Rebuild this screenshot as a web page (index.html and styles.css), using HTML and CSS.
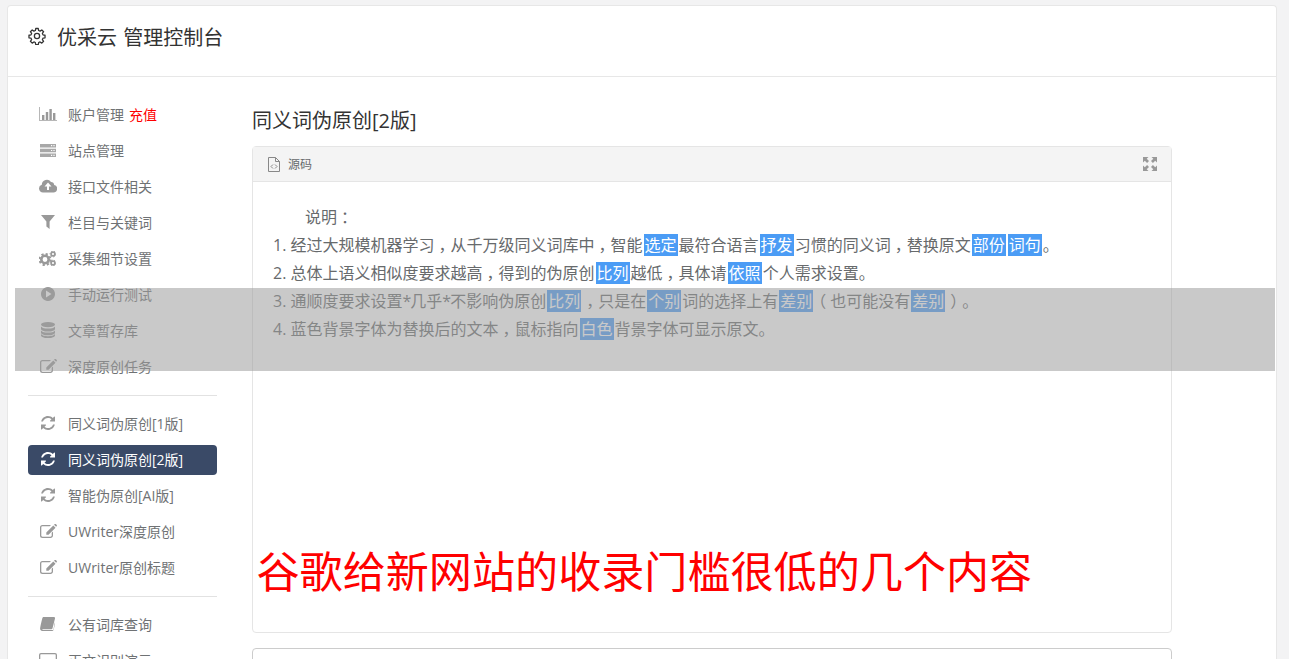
FILE: index.html
```html
<!DOCTYPE html>
<html lang="zh-CN">
<head>
<meta charset="utf-8">
<title>优采云 管理控制台</title>
<link rel="stylesheet" href="styles.css">
</head>
<body>
<svg class="defs" width="0" height="0" aria-hidden="true">
  <defs>
    <symbol id="i-chart" viewBox="0 0 18 14"><path fill-opacity=".7" d="M0 0h1v13h17v1H0z"/><path d="M3 8h2.400v5H3zM6.800 5h2.400v8H6.800zM10.400 2h2.400v11h-2.400zM14 6h2.400v7H14z"/></symbol>
    <symbol id="i-server" viewBox="0 0 16 13"><path fill-opacity=".85" d="M0 0h16v3.400H0zM0 4.800h16v3.400H0zM0 9.600h16V13H0z"/><path fill="#fff" d="M11 1.100h1.200v1.200H11zM13.400 1.100h1.200v1.200h-1.200zM11 5.900h1.200v1.200H11zM13.400 5.900h1.200v1.200h-1.200zM11 10.700h1.200v1.200H11zM13.400 10.700h1.200v1.200h-1.200z"/></symbol>
    <symbol id="i-cloud" viewBox="0 0 18 13"><path fill-rule="evenodd" d="M4 13a4 4 0 0 1-1.200-7.800A5 5 0 0 1 12 2.600a3.200 3.200 0 0 1 3.200 2.900A3.800 3.800 0 0 1 14.200 13zM9 3 5.500 7H8v3.500h2V7h2.500z"/></symbol>
    <symbol id="i-filter" viewBox="0 0 14 14"><path d="M0 0h14L8.600 6.500V14L5.400 11.500v-5z"/></symbol>
    <symbol id="i-gears" viewBox="0 0 17 15">
      <circle cx="6" cy="8.500" r="3.700" fill="none" stroke="#999" stroke-width="2.600"/>
      <circle cx="6" cy="8.500" r="5.500" fill="none" stroke="#999" stroke-width="2" stroke-dasharray="2.200 2.120"/>
      <circle cx="14" cy="3" r="1.900" fill="none" stroke="#999" stroke-width="1.600"/>
      <circle cx="14" cy="12" r="1.900" fill="none" stroke="#999" stroke-width="1.600"/>
      <circle cx="14" cy="3" r="2.900" fill="none" stroke="#999" stroke-width="1" stroke-dasharray="1.400 1.450"/>
      <circle cx="14" cy="12" r="2.900" fill="none" stroke="#999" stroke-width="1" stroke-dasharray="1.400 1.450"/>
    </symbol>
    <symbol id="i-play" viewBox="0 0 14 14"><path fill-rule="evenodd" d="M7 0a7 7 0 1 1-.01 0zM5 3.500v7L10.500 7z"/></symbol>
    <symbol id="i-db" viewBox="0 0 14 16"><ellipse cx="7" cy="2.600" rx="7" ry="2.600"/><path d="M0 4.400c1 1.600 4 2.200 7 2.200s6-.6 7-2.200v2.500c0 1.500-3.200 2.600-7 2.600S0 8.400 0 6.900zM0 8.400c1 1.600 4 2.200 7 2.200s6-.6 7-2.200v2.300c0 1.500-3.200 2.600-7 2.600S0 12.200 0 10.700zM0 12.100c1 1.600 4 2.200 7 2.200s6-.6 7-2.200v1.300c0 1.500-3.200 2.600-7 2.600s-7-1.100-7-2.600z"/></symbol>
    <symbol id="i-edit" viewBox="0 0 17 15"><path d="M2.500 1H11L9.700 2.300H2.500c-.7 0-1.200.5-1.200 1.200v8c0 .7.5 1.200 1.200 1.200h8c.7 0 1.200-.5 1.200-1.200V8.800L13 7.500v4.100c0 1.400-1.100 2.400-2.500 2.400h-8A2.500 2.500 0 0 1 0 11.500v-8A2.500 2.500 0 0 1 2.500 1z"/><path d="M13.300 1.500 15.500 3.700 8.500 10.700H6.300V8.500zM14 .8l.8-.8c.3-.2.7-.2 1 0l1 1c.2.3.2.7 0 1l-.7.7z"/></symbol>
    <symbol id="i-sync" viewBox="0 0 14 14"><path d="M13.800 8.500c-.7 3.200-3.400 5.500-6.800 5.500-1.800 0-3.500-.7-4.800-1.900L1 13.300c-.4.400-1 .1-1-.4V8.500h4.400c.5 0 .8.600.4 1L3.500 10.800c.9.800 2.100 1.300 3.500 1.300 2 0 3.800-1.100 4.700-2.900.2-.3.300-.5.400-.7zM14 1.100v4.400H9.600c-.5 0-.8-.6-.4-1l1.300-1.300C9.600 2.400 8.400 1.900 7 1.900c-2 0-3.800 1.100-4.700 2.900-.2.300-.3.500-.4.700H.2C.9 2.300 3.600 0 7 0c1.800 0 3.500.7 4.800 1.900L13 .7c.4-.4 1-.1 1 .4z"/></symbol>
    <symbol id="i-book" viewBox="0 0 15 14"><path d="M3.500 0H14c.8 0 1.200.6 1 1.400l-2.500 9.800c-.2.700-.8 1-1.400 1H2.900c-.7 0-.9.900-.2.900h9.700c.5 0 .8-.3 1-.7L15.400 3c.5.300.5.800.4 1.200L13.500 13c-.2.600-.7 1-1.400 1H2.300C1 14 0 12.900.1 11.600.2 10 2.300 1.300 2.300 1.300 2.500.6 2.900 0 3.500 0z"/></symbol>
    <symbol id="i-box" viewBox="0 0 18 14"><path fill-rule="evenodd" d="M2 0h14a2 2 0 0 1 2 2v10a2 2 0 0 1-2 2H2a2 2 0 0 1-2-2V2a2 2 0 0 1 2-2zm0 1.300a.7.7 0 0 0-.7.7v10c0 .4.300.7.700.7h14a.7.7 0 0 0 .7-.7V2a.7.7 0 0 0-.7-.7z"/></symbol>
  </defs>
</svg>

<div class="card">
  <header class="top">
    <svg class="gear" viewBox="0 0 24 24" width="18" height="18" fill="none" stroke="currentColor" stroke-width="1.700" stroke-linejoin="round">
      <circle cx="12" cy="12" r="3.500"/>
      <path d="M10.300 2h3.400l.5 2.700 1.900.8 2.300-1.600 2.400 2.400-1.600 2.300.8 1.900 2.700.5v3.400l-2.700.5-.8 1.900 1.600 2.300-2.400 2.400-2.300-1.600-1.900.8-.5 2.700h-3.400l-.5-2.700-1.900-.8-2.300 1.600-2.400-2.400 1.600-2.300-.8-1.900-2.700-.5v-3.400l2.700-.5.8-1.900-1.600-2.300 2.400-2.400 2.300 1.600 1.900-.8z"/>
    </svg>
    <h1 class="brand">优采云 管理控制台</h1>
  </header>

  <div class="main">
    <nav class="side">
      <a class="item"><svg class="ico ico-chart"><use href="#i-chart"/></svg><span>账户管理</span><b class="recharge">充值</b></a>
      <a class="item"><svg class="ico ico-server"><use href="#i-server"/></svg><span>站点管理</span></a>
      <a class="item"><svg class="ico ico-cloud"><use href="#i-cloud"/></svg><span>接口文件相关</span></a>
      <a class="item"><svg class="ico ico-filter"><use href="#i-filter"/></svg><span>栏目与关键词</span></a>
      <a class="item"><svg class="ico ico-gears"><use href="#i-gears"/></svg><span>采集细节设置</span></a>
      <a class="item"><svg class="ico ico-sync"><use href="#i-play"/></svg><span>手动运行测试</span></a>
      <a class="item"><svg class="ico ico-db"><use href="#i-db"/></svg><span>文章暂存库</span></a>
      <a class="item"><svg class="ico ico-edit"><use href="#i-edit"/></svg><span>深度原创任务</span></a>
      <hr class="rule">
      <a class="item"><svg class="ico ico-sync"><use href="#i-sync"/></svg><span>同义词伪原创[1版]</span></a>
      <a class="item active"><svg class="ico ico-sync"><use href="#i-sync"/></svg><span>同义词伪原创[2版]</span></a>
      <a class="item"><svg class="ico ico-sync"><use href="#i-sync"/></svg><span>智能伪原创[AI版]</span></a>
      <a class="item"><svg class="ico ico-edit"><use href="#i-edit"/></svg><span>UWriter深度原创</span></a>
      <a class="item"><svg class="ico ico-edit"><use href="#i-edit"/></svg><span>UWriter原创标题</span></a>
      <hr class="rule">
      <a class="item"><svg class="ico ico-book"><use href="#i-book"/></svg><span>公有词库查询</span></a>
      <a class="item"><svg class="ico ico-box"><use href="#i-box"/></svg><span>正文识别演示</span></a>
    </nav>

    <main class="content">
      <h2 class="title">同义词伪原创[2版]</h2>
      <section class="panel">
        <div class="panel-head">
          <svg class="file" viewBox="0 0 12 15" width="12" height="15" fill="none" stroke="currentColor">
            <path d="M.5.500h7l4 4v10H.500z"/><path d="M7.500.500v4h4"/><path d="M5 7.500 3 9.500l2 2M7 7.500l2 2-2 2"/>
          </svg>
          <span class="src">源码</span>
          <svg class="expand" viewBox="0 0 14 14" width="14" height="14"><path d="M0 0h5.500L3.700 1.800 6 4.100 4.100 6 1.800 3.700 0 5.500zM14 0v5.500l-1.800-1.800L9.900 6 8 4.100l2.300-2.300L8.500 0zM0 14V8.500l1.800 1.800L4.100 8 6 9.900l-2.300 2.300L5.500 14zM14 14H8.500l1.800-1.800L8 9.900 9.900 8l2.300 2.300L14 8.500z"/></svg>
        </div>
        <div class="doc">
          <p class="lead">说明<i>：</i></p>
          <p>1. 经过大规模机器学习<i>，</i>从千万级同义词库中<i>，</i>智能<em>选定</em>最符合语言<em>抒发</em>习惯的同义词<i>，</i>替换原文<em>部份</em><em>词句</em>。</p>
          <p>2. 总体上语义相似度要求越高<i>，</i>得到的伪原创<em>比列</em>越低<i>，</i>具体请<em>依照</em>个人需求设置。</p>
          <p>3. 通顺度要求设置<s>*</s>几乎<s>*</s>不影响伪原创<em>比列</em><i>，</i>只是在<em>个别</em>词的选择上有<em>差别</em><i>（</i>也可能没有<em>差别</em><i>）</i>。</p>
          <p>4. 蓝色背景字体为替换后的文本<i>，</i>鼠标指向<em>白色</em>背景字体可显示原文。</p>
        </div>
      </section>
      <section class="panel panel-next"></section>
    </main>
  </div>
</div>

<div class="veil"></div>
<div class="headline">谷歌给新网站的收录门槛很低的几个内容</div>
</body>
</html>
```

FILE: styles.css
```css
* { box-sizing: border-box; }
html, body { margin: 0; height: 100%; overflow: hidden; }
body {
  background: #f3f3f4;
  color: #676a6c;
  font-family: "Open Sans", "Noto Sans CJK SC", sans-serif;
  padding: 5px 12px 0 7px;
}
.defs { position: absolute; }
.card {
  background: #fff;
  border: 1px solid #e7e7e7;
  border-bottom: 0;
  border-radius: 4px 4px 0 0;
  height: 700px;
}
.top {
  display: flex;
  align-items: center;
  height: 71px;
  padding: 0 0 10px 20px;
  border-bottom: 1px solid #e7e7e7;
  color: #333;
}
.gear { margin-right: 11px; }
.brand { margin: 0; font-size: 20px; font-weight: 400; color: #333; word-spacing: 1px; }
.main { display: flex; padding: 23px 0 0 20px; }
.side { width: 189px; flex: none; display: flex; flex-direction: column; gap: 6px; }
.item {
  display: flex;
  align-items: center;
  height: 30px;
  padding: 0 0 2px 11px;
  font-size: 14px;
  color: #6f7274;
  fill: #999;
  border-radius: 4px;
}
.active { background: #3a4a67; color: #fff; fill: #fff; }
.ico { width: 18px; height: 14px; margin-right: 11px; flex: none; }
.ico-server { width: 16px; height: 13px; margin: 0 12px 0 1px; }
.ico-filter { width: 14px; height: 14px; margin: 0 13px 0 2px; }
.ico-gears { width: 17px; height: 15px; margin-right: 12px; }
.ico-sync { width: 14px; height: 14px; margin: 0 13px 0 2px; }
.ico-db { width: 14px; height: 16px; margin: 0 13px 0 2px; }
.ico-edit { width: 17px; height: 15px; margin: 0 11px 0 1px; }
.ico-book { width: 15px; height: 14px; margin: 0 13px 0 1px; }
.recharge { font-weight: 400; color: #f00; margin-left: 5px; }
.rule { width: 100%; height: 1px; margin: 7px 0; border: 0; background: #e2e2e2; flex: none; }
.content { width: 920px; margin-left: 35px; }
.title { margin: 6px 0 10px; font-size: 20px; line-height: 30px; font-weight: 400; color: #333; }
.panel { border: 1px solid #e5e5e5; border-radius: 4px; height: 487px; }
.panel-next { margin-top: 15px; border-color: #ccc; height: 60px; }
.panel-head {
  display: flex;
  align-items: center;
  height: 35px;
  padding: 0 14px 0 15px;
  background: #f4f4f4;
  border-bottom: 1px solid #e5e5e5;
  color: #888;
  fill: #999;
}
.src { margin-left: 8px; font-size: 12px; color: #676a6c; }
.expand { margin-left: auto; }
.doc { padding: 21px 20px 0; font-size: 16px; line-height: 28px; text-spacing-trim: space-all; }
.doc p { margin: 0; }
.doc .lead { padding-left: 32px; }
.doc em { font-style: normal; background: #4b9cf5; color: #fff; padding: 0 1px; margin: 0 1px; }
/* half-width glyph centred in a full cell, as the punctuation sits in the reference */
.doc i { font-style: normal; font-feature-settings: "halt"; padding: 0 4px; }
.doc s { text-decoration: none; letter-spacing: -1px; }
.veil {
  position: absolute;
  left: 15px;
  top: 288px;
  width: 1260px;
  height: 83px;
  background: rgba(157, 157, 157, .55);
}
.headline {
  position: absolute;
  left: 256.5px;
  top: 540px;
  font-size: 43.1px;
  line-height: 64px;
  color: #f00;
  white-space: nowrap;
}
```
